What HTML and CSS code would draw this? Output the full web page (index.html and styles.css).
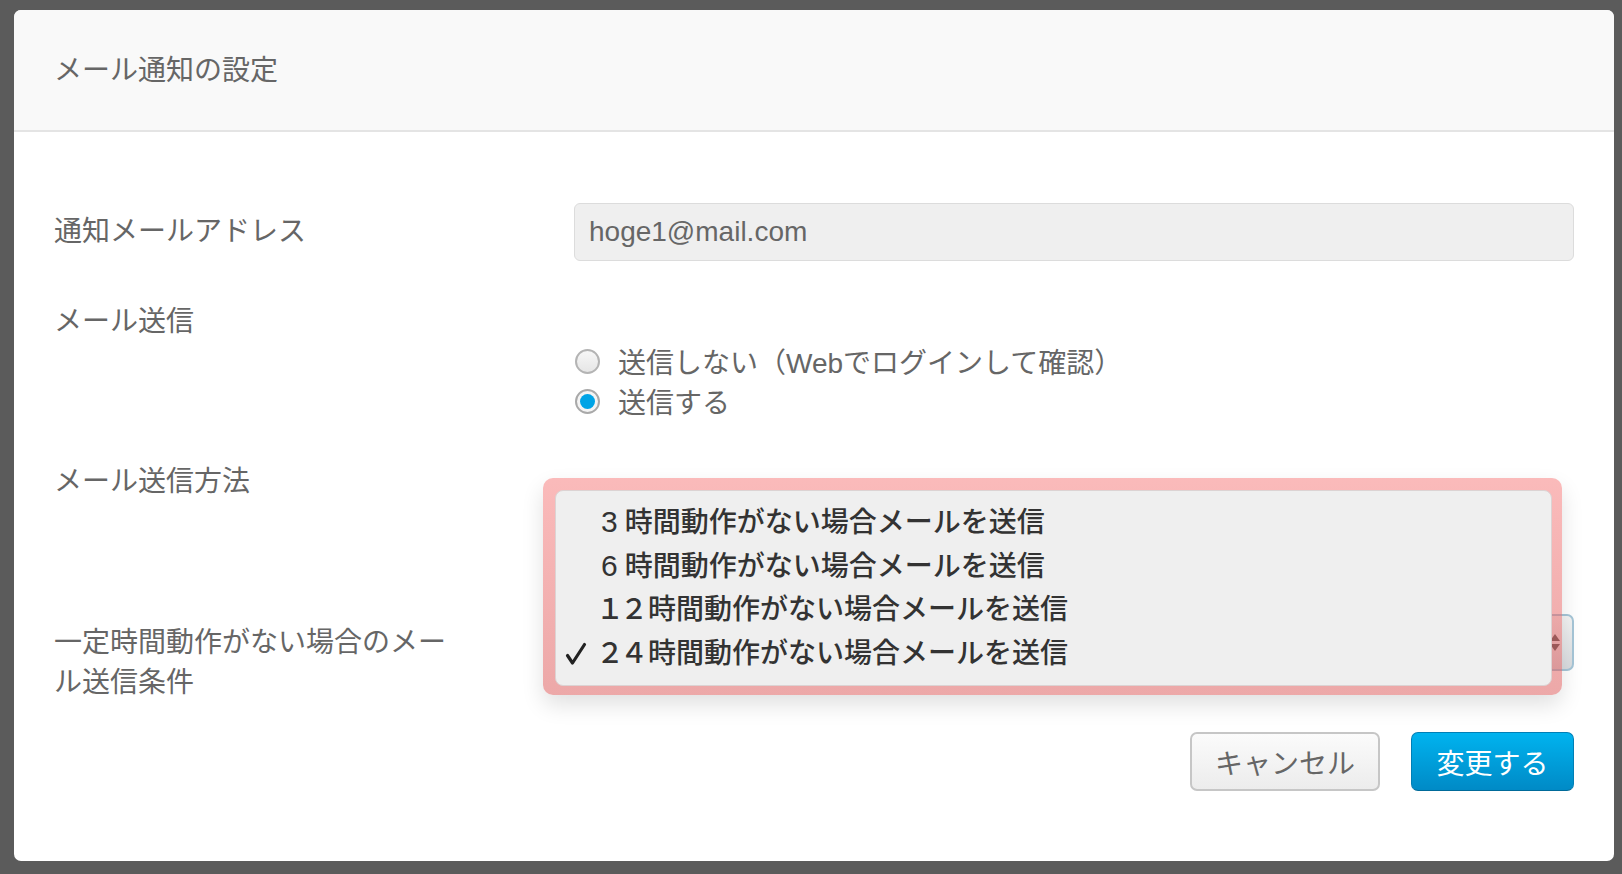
FILE: index.html
```html
<!DOCTYPE html>
<html lang="ja">
<head>
    <meta charset="UTF-8">
    <title>メール通知の設定</title>
    <link rel="stylesheet" href="styles.css">
</head>
<body>
    <div class="modal">
        <div class="modal-header">
            <h1 class="modal-title">メール通知の設定</h1>
        </div>
        <div class="modal-body">
            <form class="settings-form">
                <div class="form-row">
                    <label class="form-label">通知メールアドレス</label>
                    <div class="form-control">
                        <input type="text" class="text-input" value="hoge1@mail.com" readonly>
                    </div>
                </div>

                <div class="form-row">
                    <label class="form-label">メール送信</label>
                    <div class="form-control radio-group">
                        <label class="radio-line">
                            <input type="radio" name="send" class="radio-input">
                            <span>送信しない（Webでログインして確認）</span>
                        </label>
                        <label class="radio-line">
                            <input type="radio" name="send" class="radio-input" checked>
                            <span>送信する</span>
                        </label>
                    </div>
                </div>

                <div class="form-row">
                    <label class="form-label">メール送信方法</label>
                    <div class="form-control method-area"></div>
                </div>

                <div class="form-row last-row">
                    <label class="form-label">一定時間動作がない場合のメール送信条件</label>
                    <div class="form-control select-wrap">
                        <div class="select-box">
                            <span class="select-arrows">
                                <span class="arrow-up"></span>
                                <span class="arrow-down"></span>
                            </span>
                        </div>

                        <!-- opened menu of the select, marked in pink -->
                        <div class="popup-mark">
                            <ul class="popup-menu">
                                <li class="menu-item"><span class="num">3</span>時間動作がない場合メールを送信</li>
                                <li class="menu-item"><span class="num">6</span>時間動作がない場合メールを送信</li>
                                <li class="menu-item"><span class="num-wide">１２</span>時間動作がない場合メールを送信</li>
                                <li class="menu-item selected">
                                    <svg class="check" width="22" height="24" viewBox="0 0 22 24">
                                        <path d="M2.5 13.5 L7.5 21 L19.5 2.5" fill="none" stroke="#222" stroke-width="3.2" stroke-linecap="round" stroke-linejoin="round"/>
                                    </svg>
                                    <span class="num-wide">２４</span>時間動作がない場合メールを送信
                                </li>
                            </ul>
                        </div>
                    </div>
                </div>
            </form>

            <div class="form-actions">
                <button class="btn btn-cancel">キャンセル</button>
                <button class="btn btn-primary">変更する</button>
            </div>
        </div>
    </div>
</body>
</html>
```

FILE: styles.css
```css
/* Page */
body {
    margin: 0;
    background: #5b5b5b;
    font-family: "Liberation Sans", "Noto Sans CJK JP", sans-serif;
    color: #666;
    height: 874px;
    overflow: hidden;
}

/* Modal */
.modal {
    width: 1600px;
    margin: 10px 0 0 14px;
    background: #fff;
    border-radius: 7px;
}

.modal-header {
    height: 120px;
    background: #f9f9f9;
    border-bottom: 2px solid #e4e4e4;
    border-radius: 7px 7px 0 0;
    padding: 0 40px;
    display: flex;
    align-items: center;
}

.modal-title {
    margin: 0;
    font-size: 28px;
    font-weight: normal;
    color: #666;
    line-height: 40px;
    padding-top: 2px;
}

.modal-body {
    padding: 71px 40px 70px;
}

/* Form rows */
.form-row {
    display: grid;
    grid-template-columns: 520px 1fr;
    margin-bottom: 32px;
}

.form-row.last-row {
    margin-bottom: 29px;
}

.form-label {
    font-size: 28px;
    line-height: 40px;
    padding-top: 9px;
    max-width: 405px;
    color: #666;
}

.text-input {
    box-sizing: border-box;
    width: 100%;
    height: 58px;
    padding: 0 14px;
    border: 1px solid #dcdcdc;
    border-radius: 6px;
    background: #efefef;
    font-family: "Liberation Sans", sans-serif;
    font-size: 28px;
    color: #666;
    outline: none;
}

/* Radios */
.radio-group {
    padding-top: 48px;
}

.radio-line {
    display: flex;
    align-items: center;
    height: 40px;
    font-size: 28px;
    color: #666;
}

.radio-input {
    appearance: none;
    -webkit-appearance: none;
    width: 25px;
    height: 25px;
    margin: 0 18px 0 1px;
    border: 2px solid #b4b4b4;
    border-radius: 50%;
    background: linear-gradient(#f7f7f7, #e6e6e6);
    box-sizing: border-box;
    position: relative;
}

.radio-input:checked {
    border-color: #a9a9a9;
    background: #f4f4f4;
}

.radio-input:checked::after {
    content: "";
    position: absolute;
    left: 3px;
    top: 3px;
    width: 15px;
    height: 15px;
    border-radius: 50%;
    background: #00a4e6;
}

.method-area {
    height: 129px;
}

/* Select with its opened menu */
.select-wrap {
    position: relative;
    height: 57px;
}

.select-box {
    box-sizing: border-box;
    height: 57px;
    display: flex;
    align-items: center;
    justify-content: flex-end;
    padding: 0 12px 0 15px;
    border: 2px solid #a6c6d8;
    border-radius: 7px;
    background: linear-gradient(#f4f4f4, #d9dcdf);
}

.select-arrows {
    display: flex;
    flex-direction: column;
    gap: 3px;
}

.arrow-up,
.arrow-down {
    width: 0;
    height: 0;
    border-left: 5px solid transparent;
    border-right: 5px solid transparent;
}

.arrow-up {
    border-bottom: 7px solid #555;
}

.arrow-down {
    border-top: 7px solid #555;
}

.popup-mark {
    position: absolute;
    left: -31px;
    top: -136px;
    width: 1019px;
    box-sizing: border-box;
    padding: 12px 10px 9px 12px;
    border-radius: 10px;
    background: linear-gradient(rgba(246, 118, 118, 0.5), rgba(218, 82, 82, 0.5));
    box-shadow: 0 10px 22px rgba(0, 0, 0, 0.12);
    z-index: 10;
}

.popup-menu {
    list-style: none;
    margin: 0;
    padding: 9px 0;
    background: #efefef;
    border: 1px solid #dcd3d3;
    border-radius: 8px;
}

.menu-item {
    position: relative;
    height: 44px;
    line-height: 44px;
    padding-left: 45px;
    font-size: 28px;
    color: #333;
    font-weight: 500;
}

.num {
    font-size: 30px;
    margin-right: 7px;
}

.num-wide {
    letter-spacing: -4px;
    margin: 0 4px 0 -5px;
}

.check {
    position: absolute;
    left: 9px;
    top: 10px;
}

/* Buttons */
.form-actions {
    display: flex;
    justify-content: flex-end;
    gap: 31px;
}

.btn {
    height: 59px;
    border-radius: 7px;
    font-family: "Liberation Sans", "Noto Sans CJK JP", sans-serif;
    font-size: 28px;
    cursor: pointer;
}

.btn-cancel {
    width: 190px;
    border: 2px solid #c6c6c6;
    background: linear-gradient(#fbfbfb, #ececec);
    color: #666;
}

.btn-primary {
    width: 163px;
    border: 1px solid #007fb6;
    border-bottom-color: #006a99;
    background: linear-gradient(#00b3ef, #008ac6);
    color: #fff;
}
```
